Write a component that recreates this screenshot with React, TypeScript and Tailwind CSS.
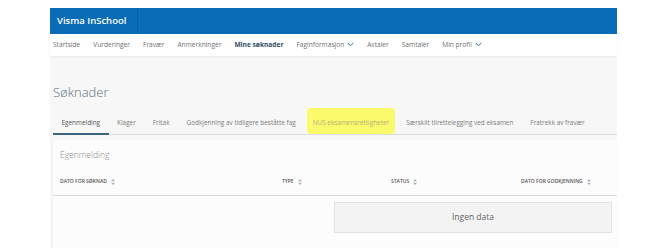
import React from "react";

const SortIcon = () => (
  <svg width="4" height="6" viewBox="0 0 4 6" className="ml-[4px] inline-block">
    <path d="M2 0 L4 2.2 H0 Z" fill="#aab0b5" />
    <path d="M2 6 L4 3.8 H0 Z" fill="#aab0b5" />
  </svg>
);

const Chevron = () => (
  <svg width="7" height="5" viewBox="0 0 7 5" className="ml-[3px]">
    <path d="M0.8 1 L3.5 3.8 L6.2 1" fill="none" stroke="#3c6e9e" strokeWidth="1" />
  </svg>
);

export default function App() {
  const nav = [
    { t: "Startside" },
    { t: "Vurderinger" },
    { t: "Fravær" },
    { t: "Anmerkninger" },
    { t: "Mine søknader", active: true },
    { t: "Faginformasjon", chev: true },
    { t: "Avtaler" },
    { t: "Samtaler" },
    { t: "Min profil", chev: true },
  ];
  const tabs = [
    "Egenmelding",
    "Klager",
    "Fritak",
    "Godkjenning av tidligere beståtte fag",
    "NUS eksamensrettigheter",
    "Særskilt tilrettelegging ved eksamen",
    "Fratrekk av fravær",
  ];
  return (
    <div className="w-[668px] h-[248px] bg-white pt-[8px] pl-[50px] overflow-hidden font-['Open_Sans',sans-serif]">
      <div className="w-[567px]">
        <div className="h-[26px] bg-[#0a6cb7] flex">
          <div className="w-[88px] h-full border-r border-[#0b5e9f] flex items-center pl-[7px] text-white text-[9.5px] font-semibold">
            Visma InSchool
          </div>
        </div>
        <div className="h-[22px] bg-white flex items-center pl-[3px] gap-[13px] text-[6.6px] text-[#6f6f6f] shadow-[0_1px_2px_rgba(0,0,0,0.06)] relative">
          {nav.map((n) => (
            <div
              key={n.t}
              className={
                "flex items-center " +
                (n.active ? "font-bold text-[#2f4d63]" : "")
              }
            >
              {n.t}
              {n.chev && <Chevron />}
            </div>
          ))}
        </div>
        <div className="bg-[#f7f7f7] h-[192px] flex flex-col">
          <div className="mt-[28px] pl-[3px] text-[13px] leading-[16px] font-light text-[#5b6f7d]">
            Søknader
          </div>
          <div className="mt-[15px] ml-[3px] flex border-b border-[#d9dcdf] text-[6.4px] text-[#7a7a7a]">
            {tabs.map((t, i) => (
              <div
                key={t}
                className={
                  "px-[8.5px] pb-[5px] pt-[3px] leading-[10px] border-b-2 -mb-[1px] " +
                  (i === 0 ? "border-[#3b6478] text-[#555]" : "border-transparent")
                }
              >
                {i === 4 ? (
                  <span className="bg-[#fafa6c] -mx-[6px] px-[6px] pt-[10px] pb-[7px] rounded-[4px] text-[#b4b07a]">
                    {t}
                  </span>
                ) : (
                  t
                )}
              </div>
            ))}
          </div>
          <div className="mt-[5px] ml-[2px] flex-1 bg-[#fcfcfc] border-l border-[#f2f2f2]">
            <div className="pl-[7px] pt-[9px] text-[8.5px] leading-[12px] font-light text-[#8a8a8a]">
              Egenmelding
            </div>
            <div className="mt-[13px] flex items-center h-[22px] border-b border-[#dcdcdc] text-[5px] font-semibold text-[#555] pb-[6px]">
              <div className="w-[229px] pl-[7px] flex items-center">
                DATO FOR SØKNAD
                <SortIcon />
              </div>
              <div className="w-[109px] flex items-center">
                TYPE
                <SortIcon />
              </div>
              <div className="w-[130px] flex items-center">
                STATUS
                <SortIcon />
              </div>
              <div className="flex items-center">
                DATO FOR GODKJENNING
                <SortIcon />
              </div>
            </div>
            <div className="flex mt-[6px]">
              <div className="w-[281px]" />
              <div className="w-[278px] h-[31px] bg-[#f3f3f3] border border-[#e2e2e2] flex items-center justify-center text-[8.5px] text-[#666]">
                Ingen data
              </div>
            </div>
          </div>
        </div>
      </div>
    </div>
  );
}
